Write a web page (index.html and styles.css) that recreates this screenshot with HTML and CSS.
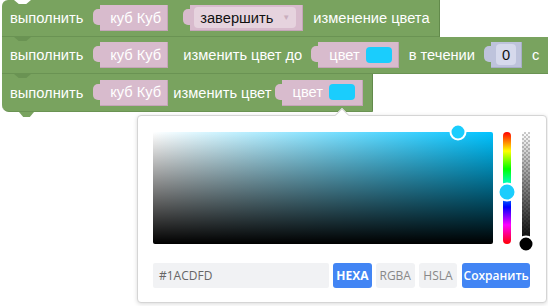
FILE: index.html
```html
<!DOCTYPE html>
<html lang="ru">
<head>
  <meta charset="UTF-8">
  <title>Блоки цвета</title>
  <link rel="stylesheet" href="styles.css">
</head>
<body>
  <div class="workspace">
    <!-- Block 1 -->
    <div class="block first">
      <span class="label">выполнить</span>
      <span class="value">куб Куб</span>
      <span class="value wide">
        <span class="dropdown">завершить <span class="caret">▼</span></span>
      </span>
      <span class="label">изменение цвета</span>
    </div>

    <!-- Block 2 -->
    <div class="block">
      <span class="label">выполнить</span>
      <span class="value">куб Куб</span>
      <span class="label after-value">изменить цвет до</span>
      <span class="value colour">цвет <span class="swatch"></span></span>
      <span class="label">в течении</span>
      <span class="value number"><span class="field">0</span></span>
      <span class="label">с</span>
    </div>

    <!-- Block 3 -->
    <div class="block last">
      <span class="label">выполнить</span>
      <span class="value">куб Куб</span>
      <span class="label tight">изменить цвет</span>
      <span class="value colour near">цвет <span class="swatch"></span></span>
    </div>
  </div>

  <!-- Colour picker popup -->
  <div class="picker">
    <div class="picker-main">
      <div class="saturation">
        <span class="thumb sat-thumb"></span>
      </div>
      <div class="hue">
        <span class="thumb hue-thumb"></span>
      </div>
      <div class="alpha">
        <span class="thumb alpha-thumb"></span>
      </div>
    </div>
    <div class="picker-bar">
      <div class="hex-input">#1ACDFD</div>
      <button class="mode active">HEXA</button>
      <button class="mode">RGBA</button>
      <button class="mode">HSLA</button>
      <button class="save">Сохранить</button>
    </div>
  </div>
</body>
</html>
```

FILE: styles.css
```css
/* General */
body {
  margin: 0;
  background: #fff;
  width: 548px;
  height: 306px;
  overflow: hidden;
  position: relative;
}

/* Blocks */
.workspace {
  display: flex;
  flex-direction: column;
  align-items: flex-start;
  padding-left: 2px;
}

.block {
  position: relative;
  display: flex;
  align-items: center;
  height: 36px;
  padding: 0 9px 0 8px;
  background-color: #79a35f;
  border-right: 1px solid #628a4b;
  border-bottom: 1px solid #6a9353;
  color: #fff;
  font-family: "Liberation Sans", Arial, sans-serif;
  font-size: 11pt;
  white-space: nowrap;
}

.block.first {
  border-top-left-radius: 6px;
}

/* previous-statement notch */
.block::before {
  content: "";
  position: absolute;
  top: 0;
  left: 12px;
  width: 17px;
  height: 4px;
  background: #6a9353;
  clip-path: polygon(0 0, 100% 0, 72% 100%, 28% 100%);
}

.block.first::before {
  background: #fff;
}

.block.last {
  height: 37px;
  border-bottom-left-radius: 7px;
}

/* next-statement tab */
.block.last::after {
  content: "";
  position: absolute;
  bottom: -6px;
  left: 17px;
  width: 15px;
  height: 5px;
  background: #79a35f;
  clip-path: polygon(0 0, 100% 0, 72% 100%, 28% 100%);
}

.label {
  margin-left: 10px;
}

.block .label:first-child {
  margin-left: 0;
}

.label.after-value {
  margin-left: 15px;
}

.label.tight {
  margin-left: 5px;
}

/* Value inputs */
.value {
  position: relative;
  display: flex;
  align-items: center;
  height: 26px;
  margin-left: 17px;
  padding: 0 6px 0 10px;
  background-color: #d8bbcd;
  border-right: 1px solid #c5a5b8;
  border-bottom: 1px solid #c5a5b8;
  box-sizing: border-box;
}

.value::before {
  content: "";
  position: absolute;
  left: -7px;
  top: 4px;
  width: 7px;
  height: 16px;
  background-color: inherit;
  border-radius: 5px 0 0 5px;
}

.value.wide {
  margin-left: 22px;
  padding: 0 6px 0 4px;
}

.value.colour {
  margin-left: 16px;
  padding-left: 11px;
}

.value.near {
  margin-left: 11px;
  padding-left: 10px;
  padding-right: 7px;
}

.dropdown {
  display: flex;
  align-items: center;
  height: 21px;
  padding: 0 6px 0 6px;
  background-color: #e6d3de;
  border-radius: 4px;
  color: #111;
}

.caret {
  margin-left: 9px;
  font-size: 8px;
  color: #c9adbd;
}

.swatch {
  display: inline-block;
  width: 26px;
  height: 16px;
  margin-left: 6px;
  background-color: #1acdfd;
  border-radius: 4px;
}

.value.number {
  margin-left: 16px;
  padding: 0 5px;
  background-color: #bec3dc;
  border-color: #a9aec8;
}

.field {
  display: flex;
  align-items: center;
  justify-content: center;
  width: 20px;
  height: 21px;
  background-color: #d6d9ec;
  border-radius: 4px;
  color: #111;
}

/* Colour picker */
.picker {
  position: absolute;
  left: 137px;
  top: 115px;
  width: 410px;
  height: 188px;
  box-sizing: border-box;
  padding: 16px 16px 14px 15px;
  background: #fff;
  border: 1px solid #d5d5d5;
  border-radius: 4px;
  box-shadow: 0 1px 4px rgba(0, 0, 0, 0.15);
  font-family: "Open Sans", "Noto Sans", sans-serif;
}

/* arrow towards the swatch */
.picker::before {
  content: "";
  position: absolute;
  top: -6px;
  left: 199px;
  width: 9px;
  height: 9px;
  background: #fff;
  border-top: 1px solid #d5d5d5;
  border-left: 1px solid #d5d5d5;
  transform: rotate(45deg);
}

.picker-main {
  display: flex;
  height: 112px;
}

.saturation {
  position: relative;
  width: 340px;
  background:
    linear-gradient(to top, #000, rgba(0, 0, 0, 0)),
    linear-gradient(to right, #fff, #00c3ff);
  border-radius: 2px;
}

.hue {
  position: relative;
  width: 8px;
  margin-left: 10px;
  border-radius: 4px;
  background: linear-gradient(to bottom, #f00, #ff0 17%, #0f0 33%, #0ff 50%, #00f 67%, #f0f 83%, #f00);
}

.alpha {
  position: relative;
  width: 8px;
  margin-left: 11px;
  background:
    linear-gradient(to bottom, rgba(0, 0, 0, 0), #000),
    repeating-conic-gradient(#ccc 0 25%, #fff 0 50%) 0 0 / 4px 4px;
}

.thumb {
  position: absolute;
  width: 13px;
  height: 13px;
  border: 2px solid #fff;
  border-radius: 50%;
  background: #1acdfd;
  transform: translate(-50%, -50%);
}

.sat-thumb {
  left: 305px;
  top: 0;
}

.hue-thumb {
  left: 4px;
  top: 60px;
  width: 15px;
  height: 15px;
}

.alpha-thumb {
  left: 4px;
  top: 112px;
  background: #000;
}

.picker-bar {
  display: flex;
  gap: 4px;
  height: 25px;
  margin-top: 19px;
}

.hex-input {
  display: flex;
  align-items: center;
  width: 177px;
  padding-left: 6px;
  box-sizing: border-box;
  background: #f1f2f4;
  color: #666;
  font-size: 12px;
  border-radius: 2px;
}

.picker-bar button {
  padding: 0;
  border: none;
  border-radius: 3px;
  font-family: "Open Sans", "Noto Sans", sans-serif;
  font-size: 12px;
  cursor: pointer;
}

.mode {
  width: 39px;
  background: #f1f2f4;
  color: #888;
}

.mode.active {
  background: #4285f4;
  color: #fff;
  font-weight: bold;
}

.save {
  width: 68px;
  margin-left: 1px;
  background: #4285f4;
  color: #fff;
  font-weight: 600;
}
```
